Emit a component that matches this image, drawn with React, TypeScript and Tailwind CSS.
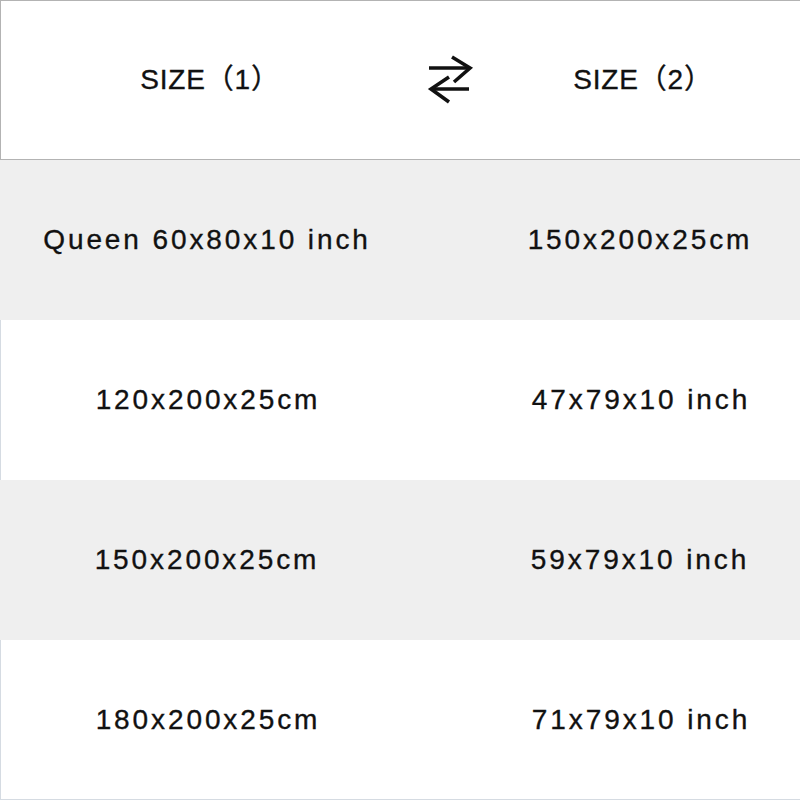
import React from "react";

const rows: { left: string; right: string; gray: boolean }[] = [
  { left: "Queen 60x80x10 inch", right: "150x200x25cm", gray: true },
  { left: "120x200x25cm", right: "47x79x10 inch", gray: false },
  { left: "150x200x25cm", right: "59x79x10 inch", gray: true },
  { left: "180x200x25cm", right: "71x79x10 inch", gray: false },
];

function SwapIcon() {
  return (
    <svg width="48" height="52" viewBox="0 0 48 52" fill="none" stroke="#111" strokeWidth="3.6" strokeLinecap="butt" strokeLinejoin="miter">
      <path d="M2 14 H42" />
      <path d="M25 3 L43 14 L27 28" />
      <path d="M5 35 H42" />
      <path d="M22 23 L4 35 L22 48" />
    </svg>
  );
}

export default function App() {
  return (
    <div
      className="w-[800px] h-[800px] bg-white flex flex-col text-[#111] [-webkit-text-stroke:0.35px_#111]"
      style={{ fontFamily: '"Liberation Sans", Arial, "Noto Sans CJK SC", sans-serif' }}
    >
      <div className="h-[160px] grid grid-cols-[410px_80px_310px] items-center border-t border-l border-b border-[#b3b3b3] bg-white">
        <div className="text-center text-[28px] tracking-[0.8px] pl-[8px]">SIZE（1）</div>
        <div className="flex justify-center">
          <SwapIcon />
        </div>
        <div className="text-center text-[28px] tracking-[0.8px] pr-[6px]">SIZE（2）</div>
      </div>
      {rows.map((r, i) => (
        <div
          key={i}
          className={
            r.gray
              ? "h-[160px] grid grid-cols-[410px_70px_320px] items-center bg-[#efefef]"
              : i === rows.length - 1
              ? "h-[160px] grid grid-cols-[410px_70px_320px] items-center bg-white border-l border-b border-[#d5dbe2]"
              : "h-[160px] grid grid-cols-[410px_70px_320px] items-center bg-white border-l border-[#d5dbe2]"
          }
        >
          <div className="text-center text-[28px] tracking-[2.9px] whitespace-nowrap pl-[4px]">{r.left}</div>
          <div />
          <div className="text-center text-[28px] tracking-[2.9px] whitespace-nowrap">{r.right}</div>
        </div>
      ))}
    </div>
  );
}
